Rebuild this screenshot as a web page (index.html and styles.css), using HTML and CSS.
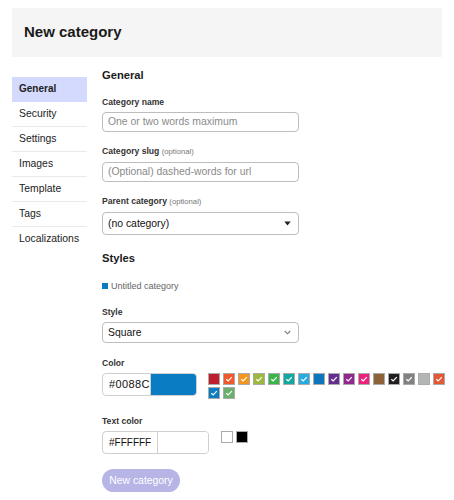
FILE: index.html
```html
<!DOCTYPE html>
<html>
<head>
<meta charset="utf-8">
<link rel="stylesheet" href="styles.css">
</head>
<body>
<div class="page">
  <div class="header"><h1 class="title">New category</h1></div>
  <div class="layout">
    <ul class="nav">
      <li class="nav-item active">General</li>
      <li class="nav-item">Security</li>
      <li class="nav-item">Settings</li>
      <li class="nav-item">Images</li>
      <li class="nav-item">Template</li>
      <li class="nav-item">Tags</li>
      <li class="nav-item last">Localizations</li>
    </ul>
    <div class="main">
      <h2 class="section">General</h2>
      <div class="label">Category name</div>
      <div class="input placeholder">One or two words maximum</div>
      <div class="label">Category slug <span class="opt">(optional)</span></div>
      <div class="input placeholder">(Optional) dashed-words for url</div>
      <div class="label">Parent category <span class="opt">(optional)</span></div>
      <div class="select tall">
        <span>(no category)</span>
        <svg class="caret" width="7" height="5" viewBox="0 0 7 5"><polygon points="0.3,0.6 6.7,0.6 3.5,4.4" fill="#222"/></svg>
      </div>
      <h2 class="section styles">Styles</h2>
      <div class="badge"><span class="badge-sq"></span><span>Untitled category</span></div>
      <div class="label lower">Style</div>
      <div class="select">
        <span>Square</span>
        <svg class="chev" width="7" height="5" viewBox="0 0 7 5"><polyline points="0.8,1 3.5,3.8 6.2,1" fill="none" stroke="#777" stroke-width="1.1"/></svg>
      </div>
      <div class="label lower">Color</div>
      <div class="color-row">
        <div class="color-input">
          <div class="hex"><span class="hex-text">#0088CC</span></div>
          <div class="preview blue"></div>
        </div>
        <div class="swatches">
          <span class="sw" style="background:#BF1E2E"></span>
          <span class="sw" style="background:#F1592A"><svg viewBox="0 0 10 10"><polyline points="2.3,5.2 4.2,7 7.8,3.2"/></svg></span>
          <span class="sw" style="background:#F7941D"><svg viewBox="0 0 10 10"><polyline points="2.3,5.2 4.2,7 7.8,3.2"/></svg></span>
          <span class="sw" style="background:#9EB83B"><svg viewBox="0 0 10 10"><polyline points="2.3,5.2 4.2,7 7.8,3.2"/></svg></span>
          <span class="sw" style="background:#3AB54A"><svg viewBox="0 0 10 10"><polyline points="2.3,5.2 4.2,7 7.8,3.2"/></svg></span>
          <span class="sw" style="background:#12A89D"><svg viewBox="0 0 10 10"><polyline points="2.3,5.2 4.2,7 7.8,3.2"/></svg></span>
          <span class="sw" style="background:#25AAE2"><svg viewBox="0 0 10 10"><polyline points="2.3,5.2 4.2,7 7.8,3.2"/></svg></span>
          <span class="sw" style="background:#0E76BD"></span>
          <span class="sw" style="background:#652D90"><svg viewBox="0 0 10 10"><polyline points="2.3,5.2 4.2,7 7.8,3.2"/></svg></span>
          <span class="sw" style="background:#92278F"><svg viewBox="0 0 10 10"><polyline points="2.3,5.2 4.2,7 7.8,3.2"/></svg></span>
          <span class="sw" style="background:#ED207B"><svg viewBox="0 0 10 10"><polyline points="2.3,5.2 4.2,7 7.8,3.2"/></svg></span>
          <span class="sw" style="background:#8C6238"></span>
          <span class="sw" style="background:#231F20"><svg viewBox="0 0 10 10"><polyline points="2.3,5.2 4.2,7 7.8,3.2"/></svg></span>
          <span class="sw" style="background:#808281"><svg viewBox="0 0 10 10"><polyline points="2.3,5.2 4.2,7 7.8,3.2"/></svg></span>
          <span class="sw" style="background:#B3B5B4"></span>
          <span class="sw" style="background:#E45735"><svg viewBox="0 0 10 10"><polyline points="2.3,5.2 4.2,7 7.8,3.2"/></svg></span>
          <span class="sw" style="background:#0A7CC4"><svg viewBox="0 0 10 10"><polyline points="2.3,5.2 4.2,7 7.8,3.2"/></svg></span>
          <span class="sw" style="background:#6AB06A"><svg viewBox="0 0 10 10"><polyline points="2.3,5.2 4.2,7 7.8,3.2"/></svg></span>
        </div>
      </div>
      <div class="label text-color">Text color</div>
      <div class="color-row">
        <div class="color-input wide">
          <div class="hex wide"><span class="hex-text">#FFFFFF</span></div>
          <div class="preview white"></div>
        </div>
        <div class="swatches small">
          <span class="sw" style="background:#FFFFFF"></span>
          <span class="sw" style="background:#000000"></span>
        </div>
      </div>
      <button class="btn">New category</button>
    </div>
  </div>
</div>
</body>
</html>
```

FILE: styles.css
```css
* { box-sizing: border-box; }
body {
  margin: 0;
  font-family: "Liberation Sans", Arial, sans-serif;
  color: #222;
  background: #fff;
}
.page { padding: 8px 12px; }
.header {
  background: #f5f5f5;
  height: 49px;
  display: flex;
  align-items: center;
  padding-left: 12px;
}
.title {
  margin: 0;
  font-size: 15px;
  font-weight: 700;
  line-height: 18px;
  padding-bottom: 2px;
  color: #1a1a1a;
}
.layout {
  display: flex;
  align-items: flex-start;
  gap: 15px;
}
.nav {
  list-style: none;
  margin: 20px 0 0;
  padding: 0;
  width: 75px;
}
.nav-item {
  height: 25px;
  line-height: 24px;
  font-size: 10.4px;
  padding-left: 7px;
  border-bottom: 1px solid #e9e9e9;
  color: #222;
}
.nav-item.active {
  background: #d3dafe;
  font-weight: 700;
  font-size: 10px;
  border-bottom-color: #d3dafe;
}
.nav-item.last { border-bottom: none; }
.main {
  width: 330px;
  margin-top: 10px;
  display: flex;
  flex-direction: column;
  align-items: flex-start;
}
.section {
  margin: 0;
  font-size: 11.2px;
  line-height: 16px;
  font-weight: 700;
  color: #1a1a1a;
}
.section.styles { margin-top: 15px; }
.label {
  font-size: 8.6px;
  line-height: 12px;
  font-weight: 700;
  color: #333;
  margin-top: 13px;
  margin-bottom: 4px;
}
.label.lower { margin-top: 14px; }
.label.text-color { margin-top: 16px; }
.opt {
  font-weight: 400;
  font-size: 7.7px;
  color: #777;
}
.input {
  width: 197px;
  height: 20px;
  border: 1px solid #bdbdbd;
  border-radius: 4px;
  font-size: 10.4px;
  line-height: 18px;
  padding-left: 5px;
  color: #222;
}
.input.placeholder { color: #8a8a8a; }
.select {
  width: 197px;
  height: 21px;
  border: 1px solid #bdbdbd;
  border-radius: 4px;
  font-size: 10.4px;
  display: flex;
  align-items: center;
  justify-content: space-between;
  padding: 0 7px 0 5px;
  color: #111;
}
.select.tall { height: 23px; }
.badge {
  margin-top: 14px;
  display: flex;
  align-items: center;
  gap: 3px;
  font-size: 9px;
  line-height: 12px;
  color: #666;
}
.badge-sq {
  width: 6px;
  height: 6px;
  background: #0a7cc4;
  display: inline-block;
}
.color-row {
  display: flex;
  align-items: flex-start;
}
.color-input {
  display: flex;
  width: 95px;
  height: 23px;
  border: 1px solid #cfcfcf;
  border-radius: 4px;
  overflow: hidden;
}
.color-input.wide { width: 107px; }
.hex {
  width: 48px;
  height: 100%;
  overflow: hidden;
  white-space: nowrap;
  font-size: 11px;
  line-height: 21px;
  padding-left: 6px;
  border-right: 1px solid #cfcfcf;
  color: #111;
  letter-spacing: 0.4px;
}
.hex.wide { width: 55px; font-size: 10px; letter-spacing: 0; }
.hex-text { display: inline-block; }
.preview { flex: 1; height: 100%; }
.preview.blue { background: #0a7cc4; }
.preview.white { background: #fff; }
.swatches {
  margin-left: 11px;
  width: 237px;
  display: flex;
  flex-wrap: wrap;
  column-gap: 3px;
  row-gap: 2px;
}
.swatches.small { margin-left: 12px; width: 30px; }
.sw {
  width: 12px;
  height: 12px;
  border: 1px solid #aaa;
  display: flex;
  align-items: center;
  justify-content: center;
}
.sw svg {
  width: 10px;
  height: 10px;
  fill: none;
  stroke: #fff;
  stroke-width: 1.2;
}
.btn {
  margin-top: 15px;
  height: 23px;
  width: 78px;
  border: none;
  border-radius: 12px;
  background: #b6b5e6;
  color: #fff;
  font-family: "Liberation Sans", Arial, sans-serif;
  font-size: 10.4px;
  padding: 0;
}
```
